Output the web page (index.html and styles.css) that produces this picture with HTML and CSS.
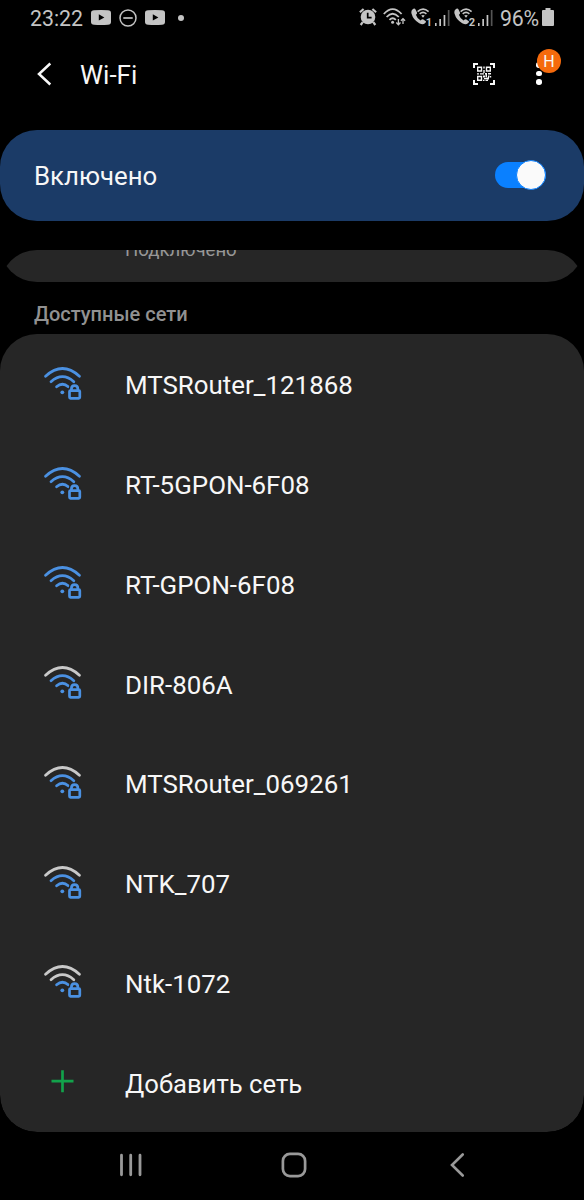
FILE: index.html
```html
<!DOCTYPE html>
<html lang="ru">
<head>
<meta charset="utf-8">
<title>Wi-Fi</title>
<link rel="stylesheet" href="styles.css">
</head>
<body>
<svg class="defs" width="0" height="0">
  <symbol id="youtube" viewBox="0 0 20 15">
    <path fill="currentColor" fill-rule="evenodd" d="M3 .3Q10-.3 17 .3Q20 .5 20 3V12Q20 14.5 17 14.7Q10 15.3 3 14.7Q0 14.5 0 12V3Q0 .5 3 .3ZM7.8 4.2V10.6L13.4 7.4Z"/>
  </symbol>
  <symbol id="call" viewBox="0 0 22 20">
    <path fill="currentColor" d="M1.2 1.8Q3.4-.3 4.4 1.2L6 4.5Q6.4 5.6 4.9 6.8Q5.7 10 9.6 12.4Q11.2 10.8 12.4 11.5L14.8 13.2Q15.6 14 13.6 15.6Q11.8 17 8.2 15.2Q2.2 12 .5 5.6Q0 3 1.2 1.8Z"/>
    <path fill="none" stroke="currentColor" stroke-width="1.6" d="M6.6 3.6Q12-1.2 17.6 3.6M8.7 5.9Q12 3 15.4 5.9"/>
    <path fill="currentColor" d="M10.2 7.6Q12 6.2 13.8 7.6L12 9.8Z"/>
  </symbol>
  <symbol id="bars" viewBox="0 0 15 16">
    <path fill="currentColor" d="M0 13h1.6v3H0zM4.3 9h1.7v7H4.3zM8.6 5h1.7v11H8.6z"/>
    <path fill="#555" d="M12.8 0h1.7v16h-1.7z"/>
  </symbol>
  <symbol id="wifi" viewBox="0 0 38 34">
    <g fill="none" stroke-width="2.8" stroke-linecap="round">
      <path class="outer" d="M1.6 9.2Q18.5-6.2 35.4 9.2"/>
      <path class="middle" d="M7 14.7Q18.5 4.6 29.8 14.7"/>
      <path class="inner" d="M12.6 19.8Q18.5 14.7 24.2 19.8"/>
    </g>
    <circle class="lock" cx="18.3" cy="25.3" r="1.9"/>
    <path class="card" d="M23.5 24.3L25.8 18.2H35.7L38 24.3Z"/>
    <g class="lockline" fill="none" stroke-width="2.7">
      <rect x="25.500" y="23.600" width="10.300" height="7.700" rx="1"/>
      <path d="M27.400 23.600V22.200Q27.400 18.700 30.600 18.700Q33.900 18.700 33.900 22.200V23.600"/>
    </g>
  </symbol>
</svg>
<div class="screen">
  <header class="status">
    <span class="clock">23:22</span>
    <svg class="yt" width="20" height="15"><use href="#youtube"/></svg>
    <svg class="dnd" width="18" height="18" fill="none" stroke="currentColor"><circle cx="9" cy="9" r="8" stroke-width="1.5"/><path d="M4.3 9h9.4" stroke-width="1.7"/></svg>
    <svg class="yt second" width="20" height="15"><use href="#youtube"/></svg>
    <i class="dot"></i>
    <svg class="alarm" width="18" height="18" viewBox="0 0 18 18">
      <circle cx="9" cy="9" r="7.3" fill="currentColor"/>
      <path d="M.9 4.3L4.6 1M17.1 4.3L13.4 1M3.7 14.2L1.7 17M14.3 14.2L16.3 17" stroke="currentColor" stroke-width="2.2"/>
      <path d="M8.7 4.8V9.6H12.6" fill="none" stroke="#000" stroke-width="1.7"/>
    </svg>
    <svg class="wlan" width="24" height="18" viewBox="0 0 24 18" fill="none" stroke="currentColor" stroke-width="1.8">
      <path d="M.8 6Q9.6-3.7 18.6 6M3.6 9Q9.6 2.5 15.8 9M6.5 11.9Q9.7 8.6 12.8 11.9"/>
      <circle cx="9.6" cy="14.3" r="1.5" fill="currentColor" stroke="none"/>
      <path stroke-width="1.3" d="M15.4 11V16.6M13.3 14.5L15.4 16.7L17.5 14.5M20 16V10.7M17.9 12.8L20 10.6L22.1 12.8"/>
    </svg>
    <span class="sim"><svg width="22" height="20"><use href="#call"/></svg><b>1</b></span>
    <svg class="signal" width="15" height="16"><use href="#bars"/></svg>
    <span class="sim"><svg width="22" height="20"><use href="#call"/></svg><b>2</b></span>
    <svg class="signal" width="15" height="16"><use href="#bars"/></svg>
    <span class="percent">96%</span>
    <svg class="battery" width="12" height="18"><path fill="currentColor" d="M3.5 0h5v2H11q1 0 1 1V17q0 1-1 1H1q-1 0-1-1V3q0-1 1-1h2.500z"/></svg>
  </header>

  <div class="appbar">
    <svg class="back" width="15" height="24" viewBox="0 0 15 24" fill="none" stroke="currentColor" stroke-width="2.5"><path d="M13.3 1.5L2 12L13.3 22.5"/></svg>
    <h1>Wi-Fi</h1>
    <svg class="qr" width="22" height="22" viewBox="0 0 22 22">
      <path fill="none" stroke="currentColor" stroke-width="2" d="M1 5V1H5M17 1H21V5M21 17V21H17M5 21H1V17"/>
      <path fill="none" stroke="currentColor" stroke-width="1.4" d="M4.700 4.200H8.500V8H4.700ZM13.500 4.200H17.300V8H13.500ZM4.700 13.500H8.500V17.300H4.700Z"/>
      <path fill="currentColor" d="M10.300 3.500h1.400v2h-1.400zM10.300 7h1.400v3h-1.400zM4 10.200h2v1.400H4zM7 10.200h4v1.400H7zM12 10h2v1.600h-2zM15 10h3v1.500h-3zM10 12.500h2v2h-2zM12.500 11.500h1.500v3h-1.500zM15 12.500h1.500v2H15zM17 13h1.200v1.500H17zM11 15h3v1.300h-3zM14 14.500h2v2h-2zM10 16.700h1.500v1.300H10zM12.500 16.700H15V18h-2.500z"/>
    </svg>
    <div class="more"><i></i><i></i><i></i><span class="badge">Н</span></div>
  </div>

  <section class="master"><span>Включено</span><span class="switch"><i></i></span></section>

  <main class="scroll">
    <section class="connected"><span>Подключено</span></section>
    <h2>Доступные сети</h2>
    <ul class="networks">
      <li><svg class="net"><use href="#wifi"/></svg><span>MTSRouter_121868</span></li>
      <li><svg class="net"><use href="#wifi"/></svg><span>RT-5GPON-6F08</span></li>
      <li><svg class="net"><use href="#wifi"/></svg><span>RT-GPON-6F08</span></li>
      <li><svg class="net good"><use href="#wifi"/></svg><span>DIR-806A</span></li>
      <li><svg class="net good"><use href="#wifi"/></svg><span>MTSRouter_069261</span></li>
      <li><svg class="net good"><use href="#wifi"/></svg><span>NTK_707</span></li>
      <li><svg class="net fair"><use href="#wifi"/></svg><span>Ntk-1072</span></li>
      <li class="add"><svg class="plus" viewBox="0 0 38 34"><path d="M18.500 5.200V27.200M7.500 16.200H29.500" stroke="#12a24b" stroke-width="2.700"/></svg><span>Добавить сеть</span></li>
    </ul>
  </main>

  <nav class="navbar">
    <svg width="24" height="24" viewBox="0 0 24 24" stroke="currentColor" stroke-width="2.800" stroke-linecap="round"><path d="M2.500 2.200V21.800M11.700 2.200V21.800M21 2.200V21.800"/></svg>
    <svg class="home" width="26" height="26" viewBox="0 0 26 26" fill="none" stroke="currentColor" stroke-width="2.700"><rect x="1.900" y="1.900" width="22.200" height="22.200" rx="7"/></svg>
    <svg class="prev" width="15" height="24" viewBox="0 0 15 24" fill="none" stroke="currentColor" stroke-width="2.600" stroke-linecap="round"><path d="M12.700 1.500L2 12L12.700 22.500"/></svg>
  </nav>
</div>
</body>
</html>
```
FILE: styles.css
```css
* { box-sizing: border-box; }
body { margin: 0; background: #000; font-family: Roboto, "Noto Sans", sans-serif; color: #f7f7f7; }
h1, h2, ul { margin: 0; padding: 0; font-weight: 400; }
svg { display: block; flex: none; }
.defs { position: absolute; }
.screen { width: 584px; height: 1200px; display: flex; flex-direction: column; overflow: hidden; }

.status { height: 36px; flex: none; display: flex; align-items: center; padding: 0 30px; color: #c4c4c4; font-size: 21.3px; white-space: nowrap; }
.clock { width: 53px; }
.yt { margin: -1px 0 0 8px; }
.dnd { margin: -1px 0 0 8px; }
.dot { width: 6px; height: 6px; margin: -1px 0 0 13px; border-radius: 50%; background: currentColor; }
.alarm { margin-left: auto; margin-top: -3px; }
.wlan { margin: -2px 0 0 6px; }
.sim { position: relative; margin-left: 4px; }
.sim b { position: absolute; right: 1px; bottom: 0; font-size: 11px; line-height: 11px; }
.signal { margin: -1px 0 0 2px; }
.percent { margin-left: 7px; width: 41px; letter-spacing: -0.2px; }
.battery { margin: -3px 0 0 1px; }

.appbar { height: 94px; flex: none; display: flex; align-items: flex-start; padding: 0 41px 0 37px; }
.back { margin-top: 26px; }
.appbar h1 { margin: 23px 0 0 28px; font-size: 26px; line-height: 32px; }
.qr { margin: 27px 0 0 auto; }
.more { position: relative; margin: 26px 0 0 41px; width: 7px; display: grid; gap: 3px; }
.more i { width: 5.5px; height: 5.5px; border-radius: 50%; background: #fff; }
.badge { position: absolute; left: 1px; top: -13px; width: 24px; height: 24px; border-radius: 50%; background: #f56a0c; font-size: 16px; line-height: 25px; text-align: center; }

.master { height: 91px; flex: none; border-radius: 37px; background: #1b3b67; display: flex; align-items: center; justify-content: space-between; padding: 1px 38px 0 34px; font-size: 25.8px; }
.switch { width: 51px; height: 26px; margin-bottom: 2px; border-radius: 13px; background: #0a80ff; display: flex; align-items: center; justify-content: flex-end; }
.switch i { width: 30px; height: 30px; flex: none; border-radius: 50%; background: #fafafa; border: 1px solid #0a80ff; }

.scroll { height: 882px; flex: none; margin-top: 29px; border-radius: 37px; overflow: hidden; display: flex; flex-direction: column; justify-content: flex-end; }
.connected { height: 100px; flex: none; border-radius: 37px; background: #262626; display: flex; align-items: flex-end; padding: 0 125px 20px; color: #979797; font-size: 18.6px; line-height: 24px; }
h2 { height: 52px; flex: none; padding: 20px 34px 0; font-size: 20px; line-height: 24px; font-weight: 500; color: #919191; }
.networks { height: 798px; flex: none; list-style: none; border-radius: 37px; background: #262626; display: grid; grid-template-rows: repeat(8, 1fr); }
.networks li { display: flex; align-items: center; padding: 3px 0 0 44px; font-size: 25.9px; }
.networks .add { font-size: 25.65px; }
.net, .plus { width: 38px; height: 34px; margin: -3px 43px 0 0; --lit: #4b91e2; --outer: var(--lit); --middle: var(--lit); }
.good, .fair { --outer: #c9c9c9; }
.fair { --middle: #c9c9c9; }
.outer { stroke: var(--outer); }
.middle { stroke: var(--middle); }
.inner, .lockline { stroke: var(--lit); }
.lock { fill: var(--lit); }
.card { fill: #262626; }

.navbar { flex: 1; display: flex; align-items: center; padding: 0 0 2px 119px; color: #999; }
.home { margin-left: 138px; }
.prev { margin-left: 143px; }
```
